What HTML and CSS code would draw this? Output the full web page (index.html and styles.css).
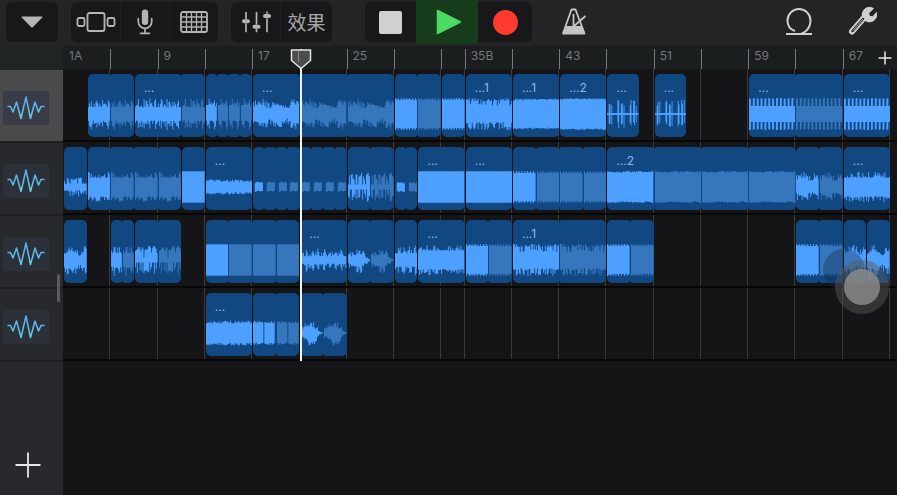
FILE: index.html
```html
<!DOCTYPE html>
<html lang="zh">
<head>
  <meta charset="UTF-8" />
  <meta name="viewport" content="width=device-width, initial-scale=1.0"/>
  <title>Tracks</title>
  <link rel="stylesheet" href="styles.css">
</head>
<body>

<header class="toolbar">
  <div class="tools">
    <div class="group">
      <button class="wide" aria-label="Menu">
        <svg width="24" height="14" viewBox="0 0 24 14"><path d="M2 1.500h20q1 0 .3.900L13 12q-1 1-2 0L1.700 2.400Q1 1.500 2 1.500z" fill="#b4b4b6"/></svg>
      </button>
    </div>
    <div class="group">
      <button aria-label="Browser">
        <svg width="40" height="22" viewBox="0 0 40 22" fill="none" stroke="#b4b4b6" stroke-width="1.800"><rect x="11.500" y="2" width="17" height="18" rx="2"/><rect x="1.500" y="7" width="7" height="8" rx="1.500"/><rect x="31.500" y="7" width="7" height="8" rx="1.500"/></svg>
      </button>
      <button aria-label="Microphone">
        <svg width="18" height="26" viewBox="0 0 18 26"><rect x="5.800" y="0.500" width="6.400" height="15.500" rx="3.200" fill="#b4b4b6"/><path d="M2.300 9.500v3.200a6.700 6.700 0 0 0 13.400 0V9.500M9 19.500V24M4.500 24.300h9" fill="none" stroke="#b4b4b6" stroke-width="1.700" stroke-linecap="round"/></svg>
      </button>
      <button aria-label="Grid">
        <svg width="28" height="22" viewBox="0 0 28 22" fill="none" stroke="#b4b4b6"><rect x="1" y="1" width="26" height="20" rx="2" stroke-width="1.800"/><path d="M6.500 1v20M11.500 1v20M16.500 1v20M21.500 1v20M1 6h26M1 11h26M1 16h26" stroke-width="1.300"/></svg>
      </button>
    </div>
    <div class="group">
      <button aria-label="Mixer">
        <svg width="30" height="22" viewBox="0 0 30 22" stroke="#b4b4b6" stroke-width="1.700" stroke-linecap="round"><path d="M5 1.500v6M5 13v7.500M15.500 1.500V13M15.500 18.500v2M26 1v1M26 8v12.500"/><path d="M3 10.200h4M13.500 15.800h4M24 5h4" stroke-width="4"/></svg>
      </button>
      <button class="fx">效果</button>
    </div>
  </div>

  <div class="transport">
    <button class="stop" aria-label="Stop"><span class="square"></span></button>
    <button class="play" aria-label="Play">
      <svg width="26" height="26" viewBox="0 0 26 26"><path d="M1.500 1.500L24.500 13 1.500 24.500z" fill="#4cd964" stroke="#4cd964" stroke-width="1.500" stroke-linejoin="round"/></svg>
    </button>
    <button class="record" aria-label="Record"><span class="dot"></span></button>
  </div>

  <div class="options">
    <button class="metronome" aria-label="Metronome">
      <svg width="26" height="28" viewBox="0 0 26 28" fill="none" stroke="#c4c4c6"><path d="M2 26.500L10.500 2.500h4L23.500 26.500z" stroke-width="1.800" stroke-linejoin="round"/><path d="M4.800 19.500h16.200l2.500 7H2z" fill="#c4c4c6"/><path d="M12.500 7v12.500M12.500 19.500L24.500 9" stroke-width="1.800"/></svg>
    </button>
    <button class="loops" aria-label="Loops">
      <svg width="28" height="30" viewBox="0 0 28 30" fill="none" stroke="#d0d0d2" stroke-width="2"><path d="M1 28h12c7 0 12.500-6 12.500-13.500a11.500 11.500 0 1 0-23 0c0 5 3 9 7.500 10.500M15 28h12"/></svg>
    </button>
    <button aria-label="Settings">
      <svg width="28" height="30" viewBox="0 0 28 30"><path d="M3 25.500L16.500 10" stroke="#d0d0d2" stroke-width="6" stroke-linecap="round"/><path d="M24.500 2.500L19.700 7l.7 3.300 3.300.5L27.500 6.500A7.300 7.300 0 1 1 24.500 2.500z" fill="#d0d0d2" stroke="#d0d0d2" stroke-linejoin="round"/><path d="M3.500 25L14 13" stroke="#242427" stroke-width="2.400" stroke-linecap="round"/><path d="M4 24.500L14 13" stroke="#d0d0d2" stroke-width=".8"/></svg>
    </button>
  </div>
</header>

<main class="workspace">
  <aside class="sidebar">
    <div class="corner"></div>
    <div class="tracks" id="tracks"></div>
    <button class="add-track" aria-label="Add track">
      <svg width="26" height="26" viewBox="0 0 26 26"><path d="M13 .5v25M.5 13h25" stroke="#e8e8e8" stroke-width="1.800"/></svg>
    </button>
    <div class="scroll-thumb"></div>
  </aside>

  <section class="timeline">
    <div class="ruler bars" id="ruler"></div>
    <button class="add-section" aria-label="Add section">
      <svg width="14" height="14" viewBox="0 0 14 14"><path d="M7 .5v13M.5 7h13" stroke="#e8e8e8" stroke-width="1.500"/></svg>
    </button>
    <div class="lanes">
      <div class="lines bars" id="lines"></div>
      <div id="lanes"></div>
    </div>
    <div class="playhead-area">
      <div class="playhead" id="playhead">
        <svg width="22" height="21" viewBox="0 0 22 21"><path d="M1.500 1h19v10.500L11 19.500 1.500 11.500z" fill="#4a4c4e" stroke="#e4e4e4" stroke-width="1.500"/><path d="M8.500 2v11" stroke="#8a8a8a"/></svg>
      </div>
    </div>
  </section>
</main>

<div class="touch-trail"></div>
<div class="touch"><span></span></div>

<script>
  // half-bar units, 70 across the timeline
  const TOTAL = 70;
  const labels = { 0: '1A', 8: '9', 16: '17', 24: '25', 34: '35B', 42: '43', 50: '51', 58: '59', 66: '67' };
  const ticks = [4, 8, 12, 16, 24, 28, 32, 34, 38, 42, 46, 50, 54, 58, 62, 66, 70];

  // [start, label, wave, loop lengths] - the first length is the original, the rest are loops
  const lanes = [
    [
      [2, '', 'vocal', [2, 2]],
      [6, '...', 'vocal', [4, 2]],
      [12, '', 'vocal', [1, 1, 1, 1]],
      [16, '...', 'speech', [4, 4, 4]],
      [28, '', 'dense', [2, 2]],
      [32, '', 'dense', [2]],
      [34, '...1', 'rough', [4]],
      [38, '...1', 'full', [4]],
      [42, '...2', 'loud', [4]],
      [46, '...', 'beat', [3]],
      [50, '...', 'beat', [3]],
      [58, '...', 'comb', [4, 4]],
      [66, '...', 'comb', [4]]
    ],
    [
      [0, '', 'low', [2]],
      [2, '', 'vocal2', [2, 2, 2, 2]],
      [10, '', 'block', [2]],
      [12, '...', 'low2', [4]],
      [16, '', 'tiny', [1, 1, 1, 1, 1, 1, 1, 1]],
      [24, '', 'burst', [2, 2]],
      [28, '', 'tiny', [1, 1]],
      [30, '...', 'block', [4]],
      [34, '...', 'block', [4]],
      [38, '', 'dense', [2, 2, 2, 2]],
      [46, '...2', 'loud', [4, 4, 4, 4]],
      [62, '', 'speech', [2, 2]],
      [66, '...', 'vocal2', [4]]
    ],
    [
      [0, '', 'speech', [2]],
      [4, '', 'vocal', [1, 1]],
      [6, '', 'burst', [2, 2]],
      [12, '', 'block', [2, 2, 2, 2]],
      [20, '...', 'pulse', [4]],
      [24, '', 'blob', [2, 2]],
      [28, '', 'vocal', [2]],
      [30, '...', 'vocal2', [4]],
      [34, '', 'dense', [2, 2]],
      [38, '...1', 'rough', [4, 4]],
      [46, '', 'dense', [2, 2]],
      [62, '', 'dense', [2, 2]],
      [66, '', 'speech', [2]],
      [68, '', 'speech', [2]]
    ],
    [
      [12, '...', 'medium', [4]],
      [16, '', 'pair', [2, 2]],
      [20, '', 'blob', [2, 2]]
    ]
  ];

  function random(seed) {
    let s = seed * 7919 + 17;
    return () => {
      s = (s * 1103515245 + 12345) % 2147483648;
      return s / 2147483648;
    };
  }

  // height of the wave at x, 0 to 1
  function level(wave, x, w, r) {
    const t = x / w;
    const swell = Math.abs(Math.sin(x * 0.55));
    switch (wave) {
      case 'vocal': return x % 6 === 3 ? 0.75 + r * 0.25 : 0.42 + r * r * 0.4;
      case 'vocal2': return 0.58 + r * r * 0.37;
      case 'speech': return 0.25 + Math.abs(Math.sin(x * 0.17 + 0.4)) * 0.3 + r * r * 0.45;
      case 'burst': return r < 0.25 ? 0.15 : 0.3 + swell * 0.35 + r * 0.3;
      case 'dense': return x % 3 === 0 ? 1 : 0.86 + r * 0.07;
      case 'rough': return r > 0.4 ? 0.65 + r * 0.35 : 0.5 + r * 0.4;
      case 'full': return 0.84 + r * 0.12;
      case 'loud': return 0.9 + r * 0.1;
      case 'comb': return x % 4 < 2 ? 0.95 + r * 0.05 : 0.5;
      case 'beat': return [2, 3, 5, 12, 13, 16, 17, 19, 26, 27, 30, 31, 33].includes(x) ? 0.5 + r * 0.4 : 0.06;
      case 'low': return 0.2 + r * r * 0.4;
      case 'low2': return 0.34 + r * 0.14 - t * 0.03;
      case 'tiny': return t > 0.85 || t < 0.1 ? 0 : 0.22 + r * 0.12;
      case 'pulse': return 0.15 + (x % 6 < 2 ? 0.3 : 0.08) + r * r * 0.3;
      case 'blob': return Math.max(0.05, (t < 0.5 ? 0.4 + t : 1.9 - t * 2) * (0.45 + r * r * 0.65));
      case 'medium': return 0.6 + r * 0.18;
      case 'pair': return x % 12 > 10 ? 0 : 0.6 + r * 0.15;
      default: return 0.98;
    }
  }

  function drawWave(wave, units, seed) {
    const w = units * 12;
    const rand = random(seed);
    let top = '';
    let bottom = '';
    for (let x = 0; x < w; x++) {
      const up = 17 - 16 * Math.min(1, level(wave, x, w, rand()));
      const down = 17 + 16 * Math.min(1, level(wave, x, w, rand()));
      top += `L${x} ${up.toFixed(1)}H${x + 1}`;
      bottom = `H${x + 1}V${down.toFixed(1)}H${x}` + bottom;
    }
    return `<svg class="wave" viewBox="0 0 ${w} 34" preserveAspectRatio="none"><path d="M0 17${top}${bottom}z"/></svg>`;
  }

  function column(start, span) {
    return `style="grid-column: ${start + 1} / span ${span}"`;
  }

  document.getElementById('ruler').innerHTML =
    ticks.slice(0, -1).map(t => `<i class="tick" ${column(t, 1)}></i>`).join('') +
    Object.keys(labels).map(t => `<span class="bar-number" ${column(Number(t), 3)}>${labels[t]}</span>`).join('');

  document.getElementById('lines').innerHTML =
    ticks.map(t => `<i class="tick" ${column(t - 1, 1)}></i>`).join('');

  document.getElementById('lanes').innerHTML = lanes.map((clips, n) => {
    const html = clips.map(([start, label, wave, loops], i) => {
      const span = loops.reduce((a, b) => a + b);
      const parts = loops.map((units, k) =>
        `<div class="part${k ? ' loop' : ''}" style="flex-grow: ${units}">${drawWave(wave, units, n * 40 + i + 1)}</div>`
      ).join('');
      const name = label ? `<span class="clip-name">${label}</span>` : '';
      return `<div class="clip${wave === 'beat' ? ' short' : ''}" ${column(start, span)}>${parts}${name}</div>`;
    }).join('');
    return `<div class="lane bars">${html}</div>`;
  }).join('');

  document.getElementById('tracks').innerHTML = lanes.map((_, n) => `
    <button class="track${n === 0 ? ' selected' : ''}" aria-label="Track ${n + 1}">
      <span class="track-icon">
        <svg width="38" height="24" viewBox="0 0 38 24" fill="none" stroke="url(#ink${n})" stroke-width="1.500" stroke-linejoin="round">
          <linearGradient id="ink${n}" x1="0" y1="0" x2="0" y2="1"><stop offset="0" stop-color="#59a8f8"/><stop offset="1" stop-color="#62cfe0"/></linearGradient>
          <path d="M.5 10.500h3l2.500 5.500 3.500-10 4.500 16.500 5-21.500 4.500 21.500 4.500-16.500 3.500 10 2.500-5.500h3.500"/>
        </svg>
      </span>
    </button>`).join('');

  document.getElementById('playhead').style.left = (20.1 / TOTAL * 100) + '%';
</script>

</body>
</html>
```
FILE: styles.css
```css
* {
  box-sizing: border-box;
}
body {
  font-family: Inter, "Liberation Sans", "Noto Sans CJK SC", sans-serif;
  background-color: #151517;
  display: flex;
  flex-direction: column;
  min-height: 100vh;
  margin: 0;
}

button {
  display: flex;
  justify-content: center;
  align-items: center;
  padding: 0;
  border: none;
  background: none;
  color: #b4b4b6;
  cursor: pointer;
}

svg {
  display: block;
}

/* toolbar */
.toolbar {
  display: grid;
  grid-template-columns: 1fr auto 1fr;
  height: 46px;
  background: #242427;
}

.tools {
  display: flex;
  gap: 13px;
  padding: 2px 0 4px 6px;
}

.group {
  display: flex;
  background: #18181a;
  border-radius: 6px;
}

.group button {
  width: 49px;
}

.group .wide {
  width: 52px;
}

.group button + button {
  border-left: 1px solid #1f1f22;
}

.group .fx {
  width: 52px;
  font-family: "Noto Sans CJK SC", sans-serif;
  font-size: 19px;
  line-height: 24px;
  color: #a8a8aa;
}

.transport {
  display: flex;
}

.transport button {
  height: 40px;
  margin-top: 2px;
  background: #18181a;
}

.transport .stop {
  width: 51px;
  border-radius: 6px 0 0 6px;
}

.transport .play {
  width: 62px;
  height: 44px;
  margin-top: 0;
  padding-left: 4px;
  background: #173c1c;
}

.transport .record {
  width: 54px;
  border-radius: 0 6px 6px 0;
}

.square {
  width: 23px;
  height: 23px;
  border-radius: 2px;
  background: #d0d0d3;
}

.dot {
  width: 25px;
  height: 25px;
  border-radius: 50%;
  background: #ff3b30;
}

.options {
  display: flex;
  gap: 16px;
  padding: 0 10px 4px 18px;
}

.options button {
  width: 48px;
}

.options .loops {
  margin-left: auto;
}

/* track headers */
.workspace {
  display: grid;
  grid-template-columns: 63px 1fr;
  flex: 1;
}

.sidebar {
  position: relative;
  display: flex;
  flex-direction: column;
  background: #28292c;
}

.corner {
  height: 24px;
  background: #212425;
}

.track {
  width: 100%;
  height: 73px;
  justify-content: flex-start;
  padding: 5px 0 0 3px;
  border-bottom: 2px solid #1f1f21;
}

.track.selected {
  background: #4a4a4c;
}

.track-icon {
  display: flex;
  justify-content: center;
  align-items: center;
  width: 46px;
  height: 34px;
  border-radius: 3px;
  background: #2c3038;
}

.selected .track-icon {
  background: #393b46;
}

.add-track {
  width: 56px;
  height: 60px;
  margin-top: auto;
}

.scroll-thumb {
  position: absolute;
  right: 3px;
  top: 228px;
  width: 3px;
  height: 28px;
  border-radius: 2px;
  background: #5a5a5c;
}

/* timeline */
.timeline {
  position: relative;
}

.bars {
  display: grid;
  grid-template-columns: repeat(70, minmax(0, 1fr));
  padding-right: 7px;
}

.ruler {
  height: 23px;
  padding-top: 3px;
  background: #1a1e1f;
}

.tick {
  grid-row: 1;
  border-left: 1px solid #77797a;
}

.bar-number {
  grid-row: 1;
  padding-left: 6px;
  font-size: 12px;
  line-height: 14px;
  color: #77797b;
}

.add-section {
  position: absolute;
  right: 5px;
  top: 5px;
}

.lanes {
  position: relative;
}

.lines {
  position: absolute;
  inset: 0;
}

.lines .tick {
  border-left: none;
  border-right: 1px solid #3a3a3b;
}

.lane {
  position: relative;
  height: 73px;
  padding-top: 5px;
  border-bottom: 2px solid #070708;
}

.clip {
  position: relative;
  grid-row: 1;
  display: flex;
  height: 63px;
  margin: 0 0 0 1px;
}

.clip.short {
  margin-right: 3px;
}

.part {
  display: flex;
  flex: 1 1 0;
  min-width: 0;
  padding: 23px 0 6px;
  border-radius: 5px;
  background: #124882;
  fill: #4da0ff;
}

.part.loop {
  padding-left: 1px;
  fill: #3576bd;
}

.part + .part {
  border-top-left-radius: 3px;
  border-bottom-left-radius: 3px;
}

.part:has(+ .part) {
  border-top-right-radius: 3px;
  border-bottom-right-radius: 3px;
}

.wave {
  width: 100%;
  height: 34px;
}

.clip-name {
  position: absolute;
  left: 9px;
  top: 6px;
  font-size: 12px;
  line-height: 15px;
  color: #8db9e8;
}

/* playhead and touch point */
.playhead-area {
  position: absolute;
  top: 3px;
  left: 0;
  right: 7px;
  height: 312px;
  pointer-events: none;
}

.playhead {
  position: absolute;
  height: 100%;
  border-left: 2px solid #f2f2f2;
}

.playhead svg {
  margin-left: -12px;
}

.touch,
.touch-trail {
  position: absolute;
  border-radius: 50%;
  pointer-events: none;
}

.touch {
  right: 8px;
  top: 260px;
  display: flex;
  justify-content: center;
  align-items: center;
  width: 54px;
  height: 54px;
  background: rgba(90, 90, 90, 0.45);
}

.touch span {
  width: 36px;
  height: 36px;
  border-radius: 50%;
  background: rgba(150, 148, 146, 0.75);
}

.touch-trail {
  right: 32px;
  top: 249px;
  width: 42px;
  height: 42px;
  background: rgba(20, 40, 70, 0.35);
}
```
